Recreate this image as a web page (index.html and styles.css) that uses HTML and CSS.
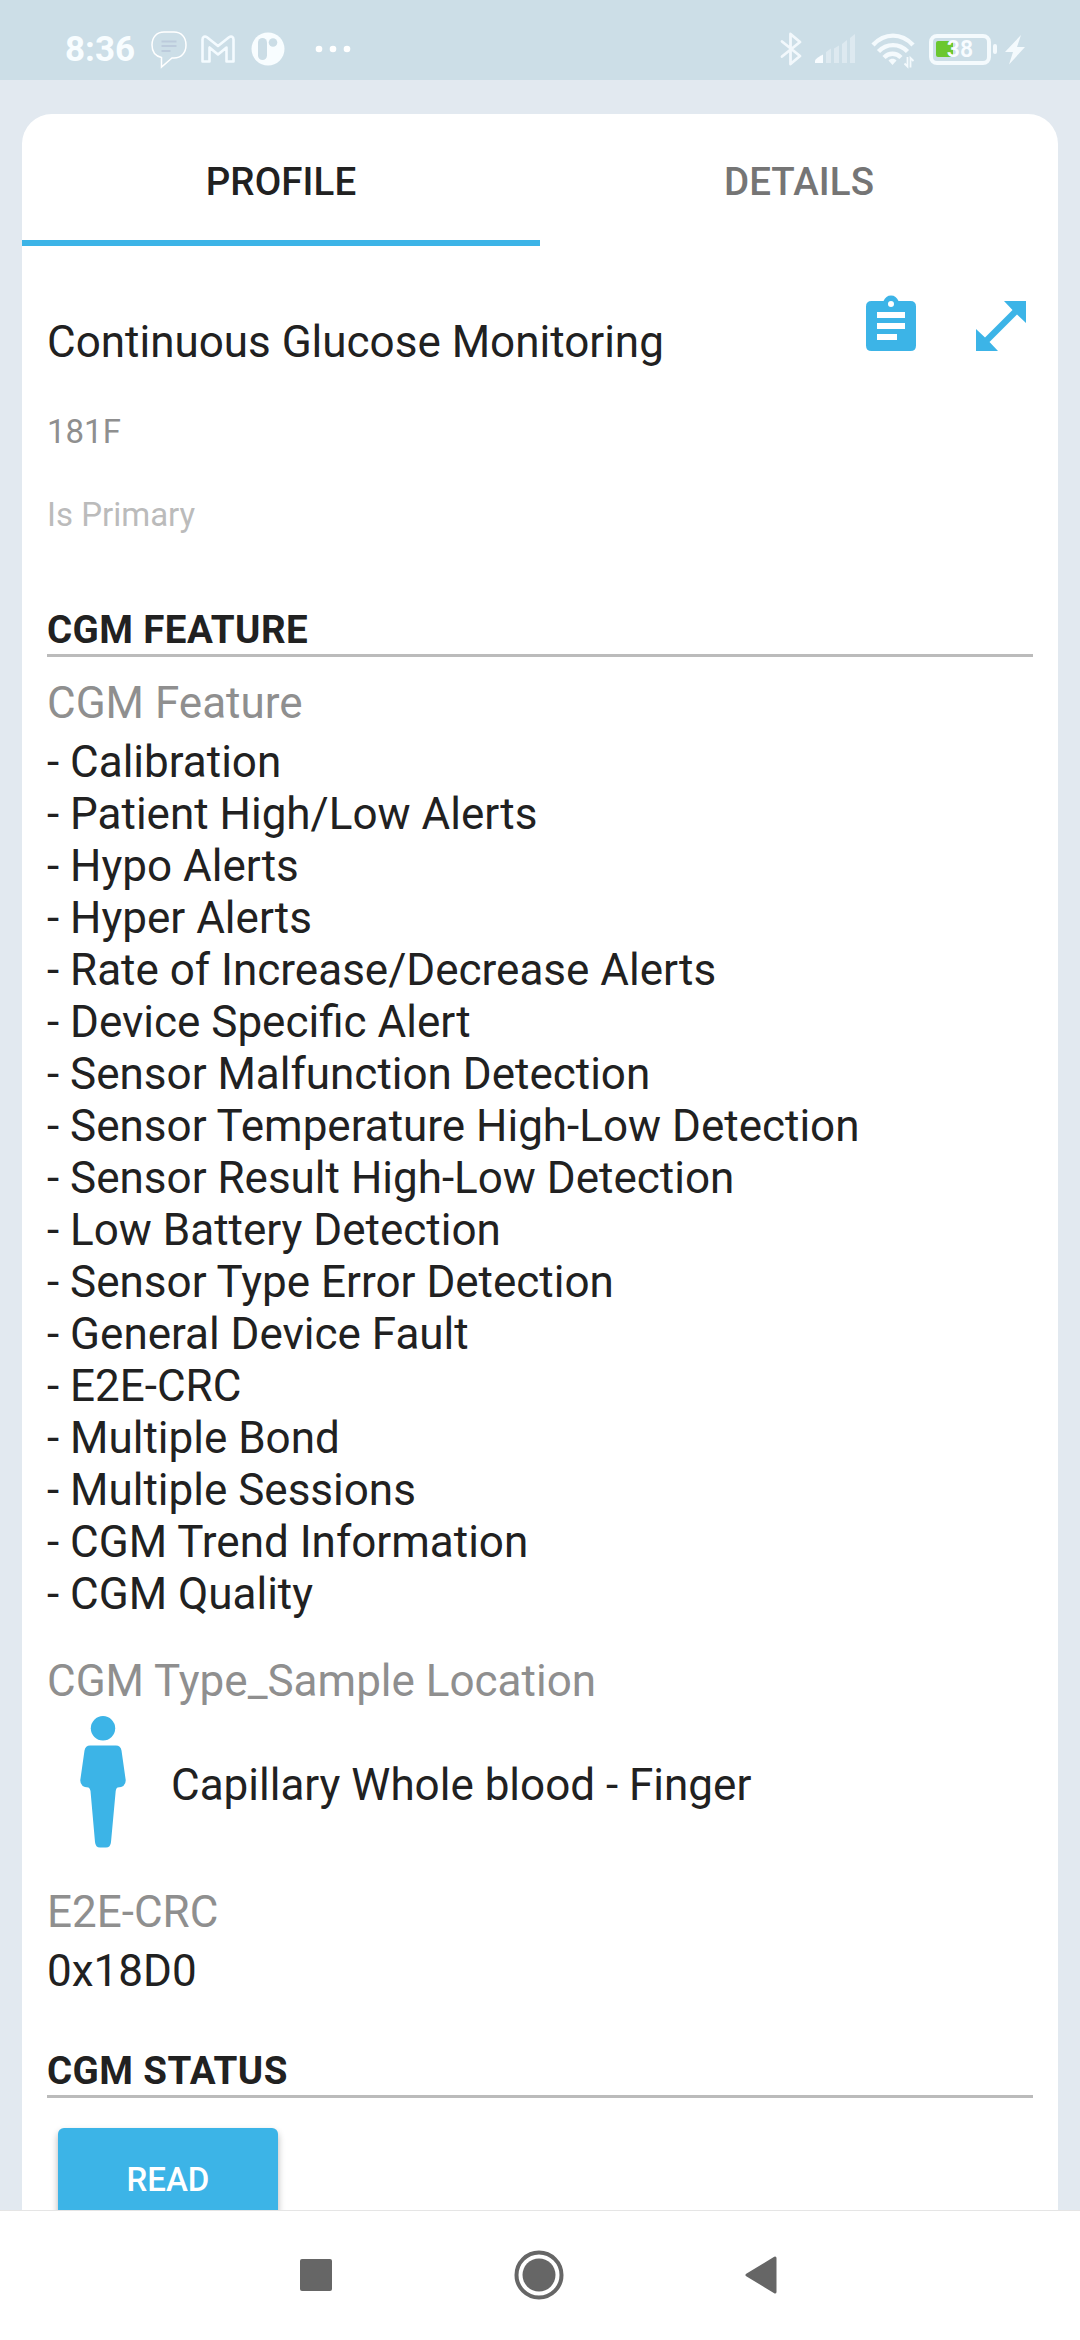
FILE: index.html
```html
<!DOCTYPE html>
<html lang="en">
<head>
<meta charset="utf-8">
<title>Continuous Glucose Monitoring</title>
<link rel="stylesheet" href="styles.css">
</head>
<body>
<div class="screen">
  <header class="status">
    <span class="clock">8:36</span>
    <svg class="i-chat" width="36" height="38" viewBox="0 0 36 38" fill="none" stroke="#fff" stroke-width="1.5"><path d="M13 1h10c7 0 12 5 12 13s-5 13-12 13h-2L10.500 36v-9.500C4 25 1 20.500 1 14 1 6 6 1 13 1z"/><path d="M10.500 10.500h15M10.500 15h15M10.500 20h9" stroke="#bccbdc" stroke-width="2"/></svg>
    <svg class="i-mail" width="34" height="28" viewBox="0 0 34 28" fill="none" stroke="#f4fbff" stroke-width="2.600" stroke-linejoin="round"><path d="M1.500 26.500V4.500C1.500 1.500 4 .8 6 2.300L17 11 28 2.300c2-1.500 4.500-.8 4.500 2.200v22h-7V12.500L17 19.500 8.500 12.500v14z"/></svg>
    <svg class="i-app" width="34" height="34" viewBox="0 0 34 34"><circle cx="17" cy="17" r="16.500" fill="#f8fdff"/><rect x="7" y="6" width="9" height="22" rx="4.500" fill="#cbdde6"/><circle cx="22" cy="10.500" r="4.300" fill="#cbdde6"/></svg>
    <svg class="i-dots" width="36" height="8" viewBox="0 0 36 8" fill="#fff"><circle cx="4" cy="4" r="3.300"/><circle cx="18" cy="4" r="3.300"/><circle cx="32" cy="4" r="3.300"/></svg>
    <span class="spacer"></span>
    <svg class="i-bt" width="22" height="34" viewBox="0 0 22 34" fill="none" stroke="#f2f8fc" stroke-width="2.800" stroke-linejoin="round" stroke-linecap="round"><path d="M2 9.500l18 14.500L10.500 32V2L20 10 2 24.500"/></svg>
    <svg class="i-signal" width="41" height="30" viewBox="0 0 41 30" fill="#dde9f0"><path d="M0 29v-2c0-2 5-5 8-6.500V29z" fill="#f8fcff"/><path d="M11 29V18l5-3.500V29zM19 29V14.500l5-3V29zM27 29V10l5-4v23zM35 29V4l5-4v29z"/></svg>
    <svg class="i-wifi" width="44" height="36" viewBox="0 0 44 36" fill="none" stroke="#f4fafd" stroke-width="4.400"><path d="M2 12C13.500-.5 30.500-.5 42 12M7.500 18.500c8-8.500 21-8.500 29 0M13 24.500c5-5 12-5 17 0"/><path d="M17.500 27.500c2-2.500 6-2.500 8 0L21.500 32z" fill="#f4fafd" stroke="none"/><path d="M36.500 24v9.500l-3-3M39.500 34.500V25l3 3" stroke-width="1.800"/></svg>
    <span class="battery"><span class="level"></span><span class="pct">38</span></span>
    <span class="nub"></span>
    <svg class="i-bolt" width="20" height="30" viewBox="0 0 20 30" fill="#f4fafd"><path d="M16 0L0 17h8L4 29.500 20 12h-8z"/></svg>
  </header>

  <main class="page">
    <section class="card">
      <nav class="tabs">
        <div class="tab active">PROFILE</div>
        <div class="tab">DETAILS</div>
      </nav>
      <div class="content">
        <div class="title-row">
          <h1>Continuous Glucose Monitoring</h1>
          <svg class="i-clip" width="50" height="58" viewBox="0 0 50 58" fill="#3cb4e7"><path fill-rule="evenodd" d="M5.500 6H17.500C19 2.500 21.500.5 25 .5S31 2.500 32.500 6H44.500Q50 6 50 11.500V50.500Q50 56 44.500 56H5.500Q0 56 0 50.500V11.500Q0 6 5.500 6zM25 6a3 3 0 1 0 0 6 3 3 0 0 0 0-6zM11 17v6h28v-6zM11 28v6h28v-6zM11 39v6h20v-6z"/></svg>
          <svg class="i-expand" width="50" height="50" viewBox="0 0 50 50" fill="#3cb4e7"><path d="M28 0H50V22L41 13.500 13.500 41 22 50H0V28L9 36.500 36.500 9z"/></svg>
        </div>
        <p class="uuid">181F</p>
        <p class="primary">Is Primary</p>

        <h2>CGM FEATURE</h2>
        <h3>CGM Feature</h3>
        <ul class="features">
          <li>- Calibration</li>
          <li>- Patient High/Low Alerts</li>
          <li>- Hypo Alerts</li>
          <li>- Hyper Alerts</li>
          <li>- Rate of Increase/Decrease Alerts</li>
          <li>- Device Specific Alert</li>
          <li>- Sensor Malfunction Detection</li>
          <li>- Sensor Temperature High-Low Detection</li>
          <li>- Sensor Result High-Low Detection</li>
          <li>- Low Battery Detection</li>
          <li>- Sensor Type Error Detection</li>
          <li>- General Device Fault</li>
          <li>- E2E-CRC</li>
          <li>- Multiple Bond</li>
          <li>- Multiple Sessions</li>
          <li>- CGM Trend Information</li>
          <li>- CGM Quality</li>
        </ul>
        <h3 class="type">CGM Type_Sample Location</h3>
        <div class="sample">
          <svg class="i-person" width="46" height="132" viewBox="0 0 46 132" fill="#3cb4e7"><circle cx="23" cy="12.300" r="12.200"/><path d="M10 29.500H36Q40.500 29.500 41.500 34.500L45.700 64Q46 71 37.500 71.500Q36 72 35.700 75L31 126Q30.500 131.500 26 131.500H20Q15.500 131.500 15 126L10.500 75Q10 72 8.500 71.500Q0 71 .3 64L4.500 34.500Q5.500 29.500 10 29.500z"/></svg>
          <span class="location">Capillary Whole blood - Finger</span>
        </div>
        <h3 class="crc">E2E-CRC</h3>
        <p class="value">0x18D0</p>
        <h2 class="status-head">CGM STATUS</h2>
        <button class="read">READ</button>
      </div>
    </section>
  </main>

  <footer class="navbar">
    <svg width="32" height="32" viewBox="0 0 32 32"><rect width="32" height="32" rx="2" fill="#666"/></svg>
    <svg class="home" width="50" height="50" viewBox="0 0 50 50"><circle cx="25" cy="25" r="22.500" fill="none" stroke="#666" stroke-width="4"/><circle cx="25" cy="25" r="16.500" fill="#666"/></svg>
    <svg class="back" width="32" height="38" viewBox="0 0 32 38"><path d="M2 19L30 2V36z" fill="#666" stroke="#666" stroke-width="3" stroke-linejoin="round"/></svg>
  </footer>
</div>
</body>
</html>
```

FILE: styles.css
```css
* { box-sizing: border-box; margin: 0; padding: 0; }
body { font-family: Roboto, sans-serif; color: #212121; background: #e2e9f0; }
.screen { width: 1080px; height: 2340px; display: flex; flex-direction: column; overflow: hidden; }
svg { display: block; flex: none; }

.status { flex: none; height: 80px; background: #ccdee7; display: flex; align-items: flex-start; padding-left: 65px; }
.clock { width: 86px; margin-top: 29px; font-size: 35px; line-height: 42px; font-weight: 700; color: #f8fdff; white-space: nowrap; }
.i-chat { margin-top: 31px; }
.i-mail { margin: 35px 0 0 14px; }
.i-app { margin: 32px 0 0 16px; }
.i-dots { margin: 45px 0 0 30px; }
.spacer { flex: 1; }
.i-bt { margin-top: 32px; }
.i-signal { margin: 34px 0 0 13px; }
.i-wifi { margin: 33px 0 0 15px; }
.battery { flex: none; position: relative; width: 62px; height: 31px; margin: 34px 0 0 14px; border: 4px solid #f4fafd; border-radius: 8px; padding: 3px; }
.level { display: block; width: 17px; height: 16px; background: #6bc72f; border-radius: 2px; }
.pct { position: absolute; left: 0; top: 0; width: 54px; text-align: center; font-size: 23px; line-height: 24px; font-weight: 600; color: #f8fcff; }
.nub { width: 4px; height: 10px; margin: 44px 8px 0 2px; background: #f4fafd; border-radius: 2px; }
.i-bolt { margin: 35px 55px 0 0; }

.page { flex: none; height: 2130px; padding: 34px 22px 0; overflow: hidden; }
.card { background: #fff; border-radius: 30px 30px 0 0; height: 2200px; }
.tabs { display: flex; height: 132px; }
.tab { flex: 1; text-align: center; font-size: 38.500px; line-height: 135px; font-weight: 480; color: #757575; letter-spacing: .1px; }
.tab.active { color: #212121; border-bottom: 6px solid #3cb4e7; }
.content { padding: 0 25px; }
.title-row { display: flex; align-items: flex-start; padding-top: 49px; height: 124px; }
h1 { flex: 1; margin-top: 21px; font-size: 44px; line-height: 52px; font-weight: 400; }
.i-expand { margin: 6px 7px 0 60px; }
.uuid, .primary { font-size: 33px; line-height: 40px; }
.uuid { margin-top: 42px; color: #8f8f8f; }
.primary { margin-top: 43px; color: #bbb; }
h2 { margin-top: 72px; height: 50px; border-bottom: 3px solid #bbb; font-size: 38.500px; line-height: 45px; font-weight: 700; letter-spacing: .4px; }
h3 { font-size: 44px; line-height: 52px; font-weight: 400; color: #8f8f8f; margin-top: 20px; }
.features { list-style: none; margin-top: 7px; font-size: 44px; line-height: 52px; }
.type { margin-top: 35px; }
.sample { display: flex; align-items: center; margin-top: 9px; padding-left: 33px; gap: 45px; font-size: 44px; line-height: 52px; }
.location { margin-top: 6px; }
.crc { margin-top: 38px; }
.value { margin-top: 7px; font-size: 44px; line-height: 52px; }
.status-head { margin-top: 51px; }
.read { display: block; width: 220px; height: 104px; margin: 30px 0 0 11px; border: 0; border-radius: 6px; background: #3cb4e7; color: #fff; font: 500 33px/104px Roboto, sans-serif; box-shadow: 0 4px 7px rgba(0,0,0,.3); }

.navbar { flex: 1; background: #fff; border-top: 1px solid #e5e5e5; display: flex; align-items: flex-start; padding: 48px 0 0 300px; }
.home { margin: -9px 0 0 182px; }
.back { margin: -3px 0 0 181px; }
```
